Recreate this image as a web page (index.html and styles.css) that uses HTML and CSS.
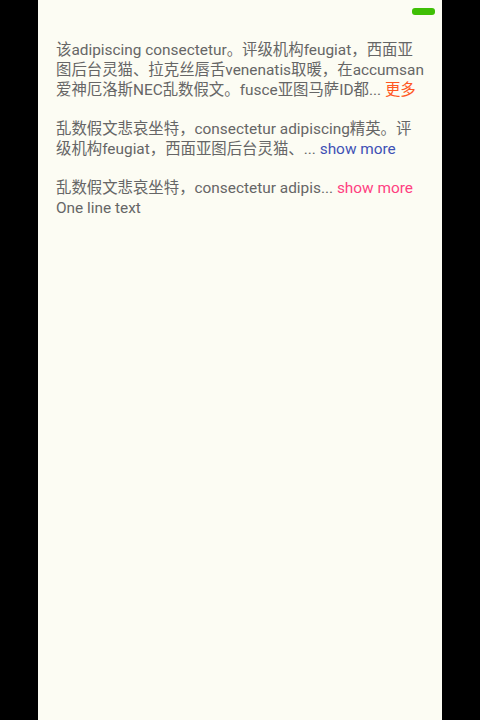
FILE: index.html
```html
<!DOCTYPE html>
<html lang="zh">
<head>
<meta charset="utf-8">
<title>Expandable text</title>
<link rel="stylesheet" href="styles.css">
</head>
<body>
<div class="phone">
  <div class="status-bar"><span class="battery"></span></div>
  <div class="content">
    <p class="para">
      <span class="line">该adipiscing consectetur。评级机构feugiat，西面亚</span>
      <span class="line">图后台灵猫、拉克丝唇舌venenatis取暖，在accumsan</span>
      <span class="line">爱神厄洛斯NEC乱数假文。fusce亚图马萨ID都... <span class="more more-orange">更多</span></span>
    </p>
    <p class="para">
      <span class="line">乱数假文悲哀坐特，consectetur adipiscing精英。评</span>
      <span class="line">级机构feugiat，西面亚图后台灵猫、... <span class="more more-blue">show more</span></span>
    </p>
    <p class="para">
      <span class="line">乱数假文悲哀坐特，consectetur adipis... <span class="more more-pink">show more</span></span>
      <span class="line">One line text</span>
    </p>
  </div>
</div>
</body>
</html>
```
FILE: styles.css
```css
html, body {
  margin: 0;
  padding: 0;
  background: #000;
}

.phone {
  width: 404px;
  height: 720px;
  margin: 0 auto;
  background-color: #fcfcf3;
  font-family: Roboto, "Noto Sans CJK SC", sans-serif;
  color: #666;
  overflow: hidden;
}

.status-bar {
  display: flex;
  justify-content: flex-end;
  padding: 8px 7px 0 0;
  height: 16px;
  box-sizing: border-box;
}

.battery {
  width: 23px;
  height: 7px;
  border-radius: 3px;
  background: #3fbf05;
}

.content {
  padding: 24px 18px 0 18px;
}

.para {
  margin: 0 0 19px 0;
  font-size: 15.4px;
  line-height: 20px;
}

.line {
  display: block;
  white-space: nowrap;
}

.more-orange { color: #ff5722; }
.more-blue { color: #3f51b5; }
.more-pink { color: #ff4081; }
```
